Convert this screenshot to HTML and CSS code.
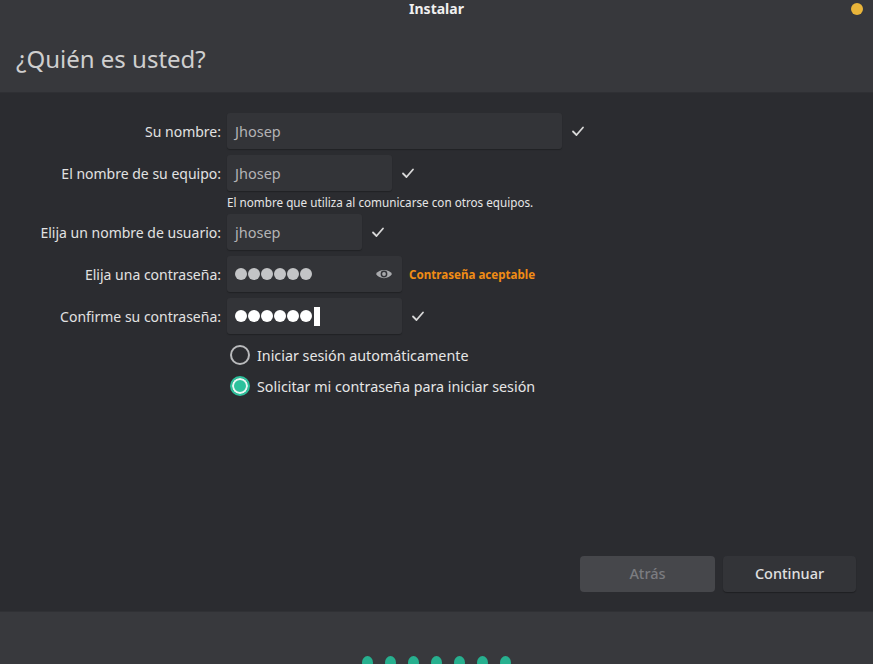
FILE: index.html
```html
<!DOCTYPE html>
<html lang="es">
<head>
<meta charset="utf-8">
<title>Instalar</title>
<link rel="stylesheet" href="styles.css">
</head>
<body>
<div class="window">
  <header class="header">
    <div class="titlebar">
      <span class="title">Instalar</span>
      <span class="close-dot"></span>
    </div>
    <h1 class="heading">¿Quién es usted?</h1>
  </header>
  <main class="content">
    <div class="form">
      <label class="label">Su nombre:</label>
      <div class="field">
        <div class="input w335">Jhosep</div>
        <svg class="check" viewBox="0 0 14 14" width="14" height="14"><path d="M2 7.5 L5.5 11 L12 3.5" fill="none" stroke="#d8d8d8" stroke-width="1.8" stroke-linecap="round" stroke-linejoin="round"/></svg>
      </div>

      <label class="label">El nombre de su equipo:</label>
      <div class="field">
        <div class="input w165">Jhosep</div>
        <svg class="check" viewBox="0 0 14 14" width="14" height="14"><path d="M2 7.5 L5.5 11 L12 3.5" fill="none" stroke="#d8d8d8" stroke-width="1.8" stroke-linecap="round" stroke-linejoin="round"/></svg>
      </div>
      <div class="spacer"></div>
      <div class="hint">El nombre que utiliza al comunicarse con otros equipos.</div>

      <label class="label">Elija un nombre de usuario:</label>
      <div class="field">
        <div class="input w135">jhosep</div>
        <svg class="check" viewBox="0 0 14 14" width="14" height="14"><path d="M2 7.5 L5.5 11 L12 3.5" fill="none" stroke="#d8d8d8" stroke-width="1.8" stroke-linecap="round" stroke-linejoin="round"/></svg>
      </div>

      <label class="label">Elija una contraseña:</label>
      <div class="field">
        <div class="input w175 pw">
          <span class="dots grey"><i></i><i></i><i></i><i></i><i></i><i></i></span>
          <svg class="eye" viewBox="0 0 18 12" width="18" height="12"><path d="M1 6 C4 0.5 14 0.5 17 6 C14 11.5 4 11.5 1 6 Z" fill="#a9aaad"/><circle cx="9" cy="6" r="3.4" fill="#333438"/><circle cx="9" cy="6" r="1.9" fill="#a9aaad"/></svg>
        </div>
        <span class="strength">Contraseña aceptable</span>
      </div>

      <label class="label">Confirme su contraseña:</label>
      <div class="field">
        <div class="input w175 pw">
          <span class="dots white"><i></i><i></i><i></i><i></i><i></i><i></i><b class="cursor"></b></span>
        </div>
        <svg class="check check2" viewBox="0 0 14 14" width="14" height="14"><path d="M2 7.5 L5.5 11 L12 3.5" fill="none" stroke="#d8d8d8" stroke-width="1.8" stroke-linecap="round" stroke-linejoin="round"/></svg>
      </div>

      <div class="spacer"></div>
      <div class="radios">
        <div class="radio"><span class="circle"></span><span>Iniciar sesión automáticamente</span></div>
        <div class="radio"><span class="circle on"></span><span>Solicitar mi contraseña para iniciar sesión</span></div>
      </div>
    </div>
    <div class="buttons">
      <button class="btn back">Atrás</button>
      <button class="btn next">Continuar</button>
    </div>
  </main>
  <footer class="footer">
    <div class="steps"><i></i><i></i><i></i><i></i><i></i><i></i><i></i></div>
  </footer>
</div>
</body>
</html>
```

FILE: styles.css
```css
* { box-sizing: border-box; }
html, body { margin: 0; padding: 0; }
body {
  width: 873px;
  height: 664px;
  overflow: hidden;
  background: #2b2c30;
  font-family: "Noto Sans", "Open Sans", sans-serif;
  color: #e2e2e2;
}
.window {
  display: flex;
  flex-direction: column;
  height: 664px;
}
.header {
  background: #37383c;
  height: 93px;
  border-bottom: 1px solid #2f3034;
  flex: none;
}
.titlebar {
  height: 18px;
  display: flex;
  justify-content: center;
  align-items: center;
  position: relative;
}
.title {
  font-weight: 700;
  font-size: 14px;
  color: #f0f0f0;
  line-height: 18px;
}
.close-dot {
  position: absolute;
  right: 10px;
  top: 3px;
  width: 12px;
  height: 12px;
  border-radius: 50%;
  background: #e9b53a;
}
.heading {
  margin: 26px 0 0 16px;
  font-weight: 400;
  font-size: 24px;
  line-height: 30px;
  color: #cfcfcf;
  letter-spacing: 0;
}
.content {
  flex: 1;
  display: flex;
  flex-direction: column;
  justify-content: space-between;
  padding: 20px 17px 19px 0;
}
.form {
  display: grid;
  grid-template-columns: 221px 1fr;
  column-gap: 6px;
  row-gap: 6px;
  align-items: center;
}
.label {
  text-align: right;
  font-size: 14px;
  color: #e2e2e2;
}
.field {
  display: flex;
  align-items: center;
  height: 36px;
}
.input {
  height: 36px;
  background: #333438;
  border-radius: 3px;
  font-size: 14.5px;
  color: #b3b3b5;
  padding: 0 8px;
  display: flex;
  align-items: center;
  box-shadow: 0 1px 1px rgba(0,0,0,0.25);
}
.w335 { width: 335px; }
.w165 { width: 165px; }
.w135 { width: 135px; }
.w175 { width: 175px; }
.check { margin-left: 9px; }
.check2 { margin-left: 9px; }
.hint {
  font-size: 11.7px;
  color: #e6e6e6;
  margin-top: -2px;
  margin-bottom: -1px;
  line-height: 14px;
}
.pw { justify-content: space-between; padding-right: 9px; }
.dots { display: flex; align-items: center; gap: 1px; }
.dots i {
  width: 12px;
  height: 12px;
  border-radius: 50%;
  display: block;
}
.grey i { background: #c3c4c6; }
.white i { background: #ffffff; }
.cursor {
  display: block;
  width: 6px;
  height: 19px;
  background: #ffffff;
  margin-left: 1px;
}
.strength {
  margin-left: 7px;
  font-size: 11.6px;
  font-weight: 700;
  color: #f18c15;
}
.radios {
  display: flex;
  flex-direction: column;
  gap: 9px;
  margin-top: 4px;
}
.radio {
  display: flex;
  align-items: center;
  font-size: 14.3px;
  color: #e6e6e6;
  height: 22px;
  margin-left: 3px;
}
.circle {
  width: 20px;
  height: 20px;
  border-radius: 50%;
  border: 2px solid #b9babc;
  margin-right: 7px;
  flex: none;
}
.circle.on {
  border-color: #2dc19c;
  background: #2dc19c;
  box-shadow: inset 0 0 0 2px #e9f7f3;
  background-clip: padding-box;
}
.buttons {
  display: flex;
  justify-content: flex-end;
  gap: 8px;
}
.btn {
  height: 36px;
  border: none;
  border-radius: 4px;
  font-family: inherit;
  font-size: 14.5px;
  font-weight: 500;
  padding-bottom: 3px;
}
.back {
  width: 135px;
  background: #46474b;
  color: #7b7c80;
}
.next {
  width: 133px;
  background: #333438;
  color: #e0e0e0;
  box-shadow: 0 1px 1px rgba(0,0,0,0.3);
}
.footer {
  flex: none;
  height: 53px;
  background: #38393d;
  border-top: 1px solid #303135;
  display: flex;
  justify-content: center;
  align-items: flex-end;
  overflow: hidden;
}
.steps {
  display: flex;
  gap: 12px;
  margin-bottom: -5px;
}
.steps i {
  display: block;
  width: 11px;
  height: 13px;
  border-radius: 50%;
  background: #27b08f;
}
```
